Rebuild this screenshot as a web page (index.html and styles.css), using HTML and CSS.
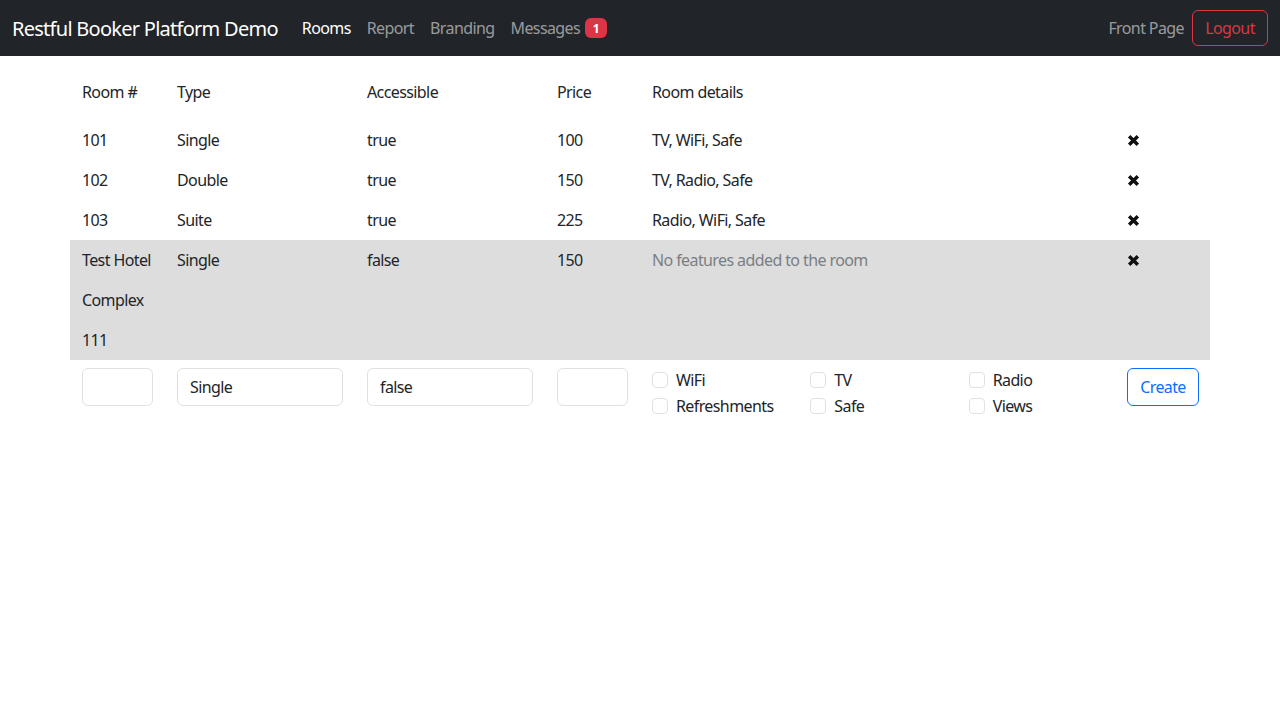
FILE: index.html
```html
<!DOCTYPE html>
<html lang="en">
<head>
<meta charset="utf-8">
<title>Restful Booker Platform Demo</title>
<link rel="stylesheet" href="styles.css">
</head>
<body>
<nav class="navbar">
  <a class="brand" href="#">Restful Booker Platform Demo</a>
  <ul class="nav">
    <li><a class="nav-link active" href="#">Rooms</a></li>
    <li><a class="nav-link" href="#">Report</a></li>
    <li><a class="nav-link" href="#">Branding</a></li>
    <li><a class="nav-link" href="#">Messages<span class="badge">1</span></a></li>
  </ul>
  <div class="nav-right">
    <a class="nav-link" href="#">Front Page</a>
    <button class="btn-logout" type="button">Logout</button>
  </div>
</nav>

<main class="container">
  <div class="row head">
    <div class="cell">Room #</div>
    <div class="cell">Type</div>
    <div class="cell">Accessible</div>
    <div class="cell">Price</div>
    <div class="cell">Room details</div>
    <div class="cell"></div>
  </div>

  <div class="row">
    <div class="cell">101</div>
    <div class="cell">Single</div>
    <div class="cell">true</div>
    <div class="cell">100</div>
    <div class="cell">TV, WiFi, Safe</div>
    <div class="cell"><span class="del"><svg viewBox="0 0 12 12" width="13" height="13"><path d="M2 2 L10 10 M10 2 L2 10" /></svg></span></div>
  </div>
  <div class="row">
    <div class="cell">102</div>
    <div class="cell">Double</div>
    <div class="cell">true</div>
    <div class="cell">150</div>
    <div class="cell">TV, Radio, Safe</div>
    <div class="cell"><span class="del"><svg viewBox="0 0 12 12" width="13" height="13"><path d="M2 2 L10 10 M10 2 L2 10" /></svg></span></div>
  </div>
  <div class="row">
    <div class="cell">103</div>
    <div class="cell">Suite</div>
    <div class="cell">true</div>
    <div class="cell">225</div>
    <div class="cell">Radio, WiFi, Safe</div>
    <div class="cell"><span class="del"><svg viewBox="0 0 12 12" width="13" height="13"><path d="M2 2 L10 10 M10 2 L2 10" /></svg></span></div>
  </div>
  <div class="row hover">
    <div class="cell">Test Hotel Complex 111</div>
    <div class="cell">Single</div>
    <div class="cell">false</div>
    <div class="cell">150</div>
    <div class="cell muted">No features added to the room</div>
    <div class="cell"><span class="del"><svg viewBox="0 0 12 12" width="13" height="13"><path d="M2 2 L10 10 M10 2 L2 10" /></svg></span></div>
  </div>

  <form class="row form-row">
    <div class="cell"><input class="input" type="text"></div>
    <div class="cell"><input class="input" type="text" value="Single"></div>
    <div class="cell"><input class="input" type="text" value="false"></div>
    <div class="cell"><input class="input" type="text"></div>
    <div class="cell details">
      <div class="sub">
        <label class="check"><span class="box"></span>WiFi</label>
        <label class="check"><span class="box"></span>Refreshments</label>
      </div>
      <div class="sub">
        <label class="check"><span class="box"></span>TV</label>
        <label class="check"><span class="box"></span>Safe</label>
      </div>
      <div class="sub">
        <label class="check"><span class="box"></span>Radio</label>
        <label class="check"><span class="box"></span>Views</label>
      </div>
    </div>
    <div class="cell"><button class="btn-create" type="button">Create</button></div>
  </form>
</main>
</body>
</html>
```

FILE: styles.css
```css
* { box-sizing: border-box; }

body {
  margin: 0;
  font-family: "Noto Sans", "Open Sans", sans-serif;
  font-size: 16px;
  color: #212529;
  background: #fff;
  letter-spacing: -0.6px;
}

a { text-decoration: none; }

.navbar {
  height: 56px;
  background: #212529;
  display: flex;
  align-items: center;
  padding: 0 12px;
}

.brand {
  color: #fff;
  font-size: 20px;
  margin-right: 16px;
  letter-spacing: -0.73px;
}

.nav {
  list-style: none;
  margin: 0;
  padding: 0;
  display: flex;
  flex: 1;
}

.nav-link {
  color: rgba(255, 255, 255, 0.55);
  padding: 8px;
  display: flex;
  align-items: center;
}

.nav-link.active { color: #fff; }

.badge {
  background: #dc3545;
  color: #fff;
  font-size: 12px;
  font-weight: 700;
  width: 22px;
  height: 20px;
  border-radius: 6px;
  display: inline-flex;
  align-items: center;
  justify-content: center;
  margin-left: 5px;
  letter-spacing: 0;
}

.nav-right {
  display: flex;
  align-items: center;
}

.btn-logout {
  font-family: inherit;
  font-size: 16px;
  letter-spacing: inherit;
  color: #dc3545;
  background: transparent;
  border: 1px solid #dc3545;
  border-radius: 6px;
  height: 36px;
  width: 76px;
  padding: 0;
}

.container {
  width: 1140px;
  margin: 0 auto;
  padding-top: 16px;
}

.row {
  display: grid;
  grid-template-columns: 95px 190px 190px 95px 475px 95px;
  line-height: 40px;
}

.row.head { margin-bottom: 8px; }

.row.hover { background: #dddddd; }

.cell { padding: 0 12px; }

.muted { color: #7a7f84; }

.del {
  display: flex;
  height: 40px;
  align-items: center;
}

.del svg path {
  stroke: #111;
  stroke-width: 3.2;
  fill: none;
}

.form-row {
  line-height: 24px;
  padding-top: 8px;
}

.input {
  display: block;
  width: 100%;
  height: 38px;
  border: 1px solid #dee2e6;
  border-radius: 6px;
  padding: 6px 12px;
  font-family: inherit;
  font-size: 16px;
  letter-spacing: inherit;
  color: #212529;
  background: #fff;
}

.details {
  padding: 0;
  display: grid;
  grid-template-columns: 1fr 1fr 1fr;
}

.sub { padding: 0 12px; }

.check {
  display: flex;
  align-items: center;
  min-height: 24px;
  margin-bottom: 2px;
}

.box {
  width: 16px;
  height: 16px;
  border: 1px solid #dee2e6;
  border-radius: 4px;
  margin-right: 8px;
  flex: none;
}

.btn-create {
  font-family: inherit;
  font-size: 16px;
  letter-spacing: inherit;
  color: #0d6efd;
  background: #fff;
  border: 1px solid #0d6efd;
  border-radius: 6px;
  height: 38px;
  width: 72px;
  padding: 0;
}
```
